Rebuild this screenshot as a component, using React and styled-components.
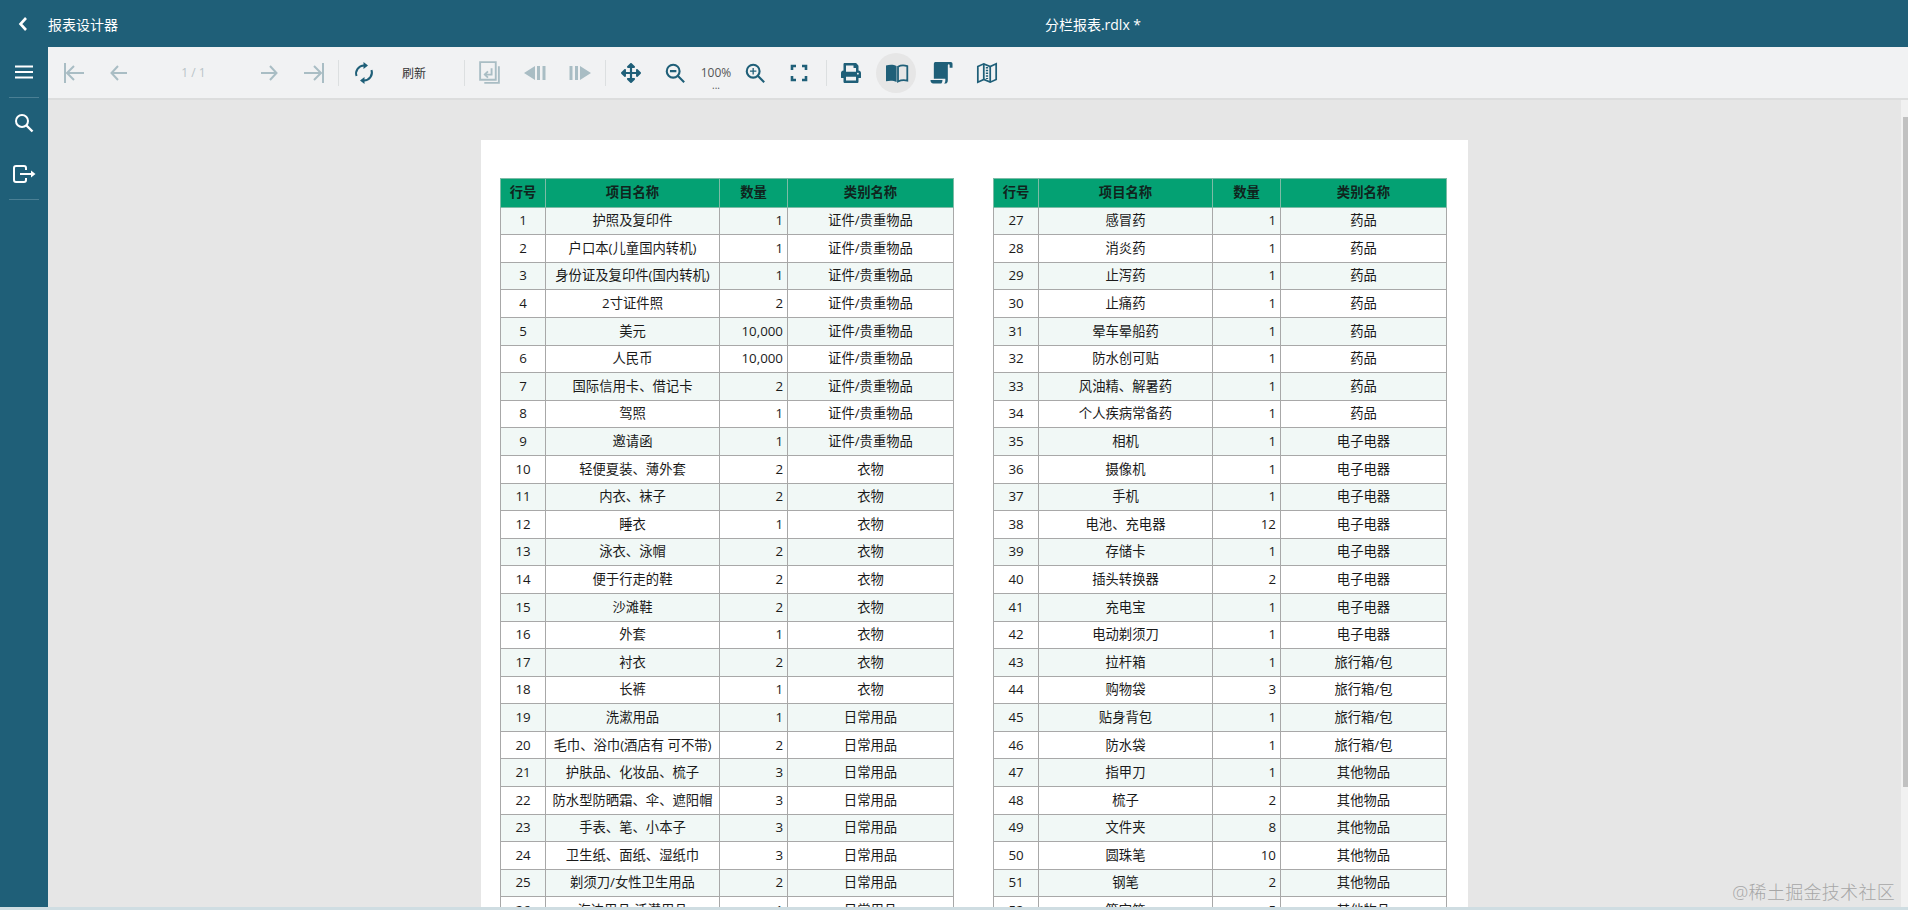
import React from 'react';
import styled, {createGlobalStyle} from 'styled-components';
import {FaArrowsAlt, FaPrint} from 'react-icons/fa';

const GlobalStyle = createGlobalStyle`
  html, body {
    margin: 0;
    padding: 0;
    height: 100%;
    overflow: hidden;
  }
  body {
    font-family: "Open Sans", "Noto Sans CJK SC", sans-serif;
    color: #222;
  }
`

const Screen = styled.div`
  position: relative;
  display: flex;
  flex-direction: column;
  width: 1908px;
  height: 910px;
  overflow: hidden;
`
const TopBar = styled.header`
  flex: none;
  display: flex;
  align-items: center;
  height: 47px;
  padding-left: 18px;
  background: #1f5f78;
  color: #fff;
  font-size: 14px;
`
const BackButton = styled.svg`
  width: 10px;
  height: 16px;
  margin-right: 20px;
`
const AppTitle = styled.span`
  width: 200px;
`
const FileTitle = styled.span`
  flex: 1;
  text-align: center;
  padding-left: 30px;
`
const Body = styled.div`
  flex: 1;
  display: flex;
  min-height: 0;
`
const Sidebar = styled.nav`
  flex: none;
  display: flex;
  flex-direction: column;
  align-items: center;
  width: 48px;
  background: #1f5f78;
`
const SideItem = styled.div`
  display: flex;
  align-items: center;
  justify-content: center;
  width: 30px;
  height: ${p => p.$h}px;
  border-bottom: ${p => (p.$line ? '1px solid #4a7f94' : 'none')};
`
const Main = styled.main`
  flex: 1;
  display: flex;
  flex-direction: column;
  min-width: 0;
`
const Toolbar = styled.div`
  flex: none;
  display: flex;
  align-items: center;
  height: 51px;
  padding-left: 3px;
  background: #f1f2f3;
  border-bottom: 2px solid #dcdddd;
`
const ToolButton = styled.div`
  position: relative;
  flex: none;
  display: flex;
  align-items: center;
  justify-content: center;
  width: ${p => p.$w || 45}px;
  height: 40px;
  color: ${p => (p.$off ? '#a9bdc4' : '#1f5f78')};
  &::before {
    content: '';
    display: ${p => (p.$active ? 'block' : 'none')};
    position: absolute;
    left: 2px;
    top: 0;
    width: 40px;
    height: 40px;
    border-radius: 50%;
    background: #e6e6e6;
  }
  svg {
    position: relative;
  }
`
const PageLabel = styled(ToolButton)`
  font-size: 12px;
  color: #b9c4c8;
`
const RefreshLabel = styled(ToolButton)`
  justify-content: flex-start;
  padding-left: 16px;
  box-sizing: border-box;
  font-size: 12px;
  color: #333;
`
const ZoomValue = styled.div`
  flex: none;
  position: relative;
  width: 40px;
  height: 40px;
  display: flex;
  align-items: center;
  justify-content: center;
  font-size: 12px;
  color: #555;
  &::after {
    content: '...';
    position: absolute;
    left: 0;
    right: 0;
    top: 26px;
    text-align: center;
    font-size: 10px;
    line-height: 12px;
    color: #555;
  }
`
const Separator = styled.span`
  flex: none;
  width: 1px;
  height: 26px;
  margin: 0 ${p => p.$gap || 2}px;
  background: #dcdfe0;
`
const ViewerRow = styled.div`
  flex: 1;
  display: flex;
  min-height: 0;
`
const Canvas = styled.div`
  flex: 1;
  display: flex;
  justify-content: center;
  min-width: 0;
  padding-top: 40px;
  overflow: hidden;
  background: #e6e6e6;
`
const Page = styled.div`
  flex: none;
  display: flex;
  align-items: flex-start;
  gap: 39px;
  width: 987px;
  height: 1300px;
  padding: 38px 20px 0 19px;
  box-sizing: border-box;
  background: #fff;
`
const Sheet = styled.table`
  flex: none;
  width: 453px;
  table-layout: fixed;
  border-collapse: collapse;
  font-size: 13.33px;
  line-height: 1;
  color: #1a1a1a;
`
const HeadCell = styled.th`
  height: 27.6px;
  padding: 0;
  background: #04a173;
  border: 1px solid #7dbba6;
  font-weight: 700;
  color: #10241d;
  text-align: center;
`
const Row = styled.tr`
  height: 27.6px;
  background: ${p => (p.$shade ? '#f1f8f6' : '#fff')};
`
const Cell = styled.td`
  padding: 0 ${p => (p.$right ? '4px' : '0')} 0 0;
  border: 1px solid #a8a8a8;
  text-align: ${p => (p.$right ? 'right' : 'center')};
  white-space: nowrap;
  overflow: hidden;
`
const ScrollTrack = styled.div`
  flex: none;
  width: 5px;
  padding-left: 2px;
  padding-top: 17px;
  background: #f1f1f1;
`
const ScrollThumb = styled.div`
  width: 5px;
  height: 670px;
  background: #c1c1c1;
`
const BottomEdge = styled.div`
  flex: none;
  height: 3px;
  background: #cfdde2;
`
const Watermark = styled.div`
  position: absolute;
  right: 13px;
  bottom: 6px;
  font-size: 18px;
  line-height: 24px;
  letter-spacing: 0.3px;
  color: #a6a6a6;
  font-weight: 300;
`

const leftRows = [
  [1, '护照及复印件', '1', '证件/贵重物品'],
  [2, '户口本(儿童国内转机)', '1', '证件/贵重物品'],
  [3, '身份证及复印件(国内转机)', '1', '证件/贵重物品'],
  [4, '2寸证件照', '2', '证件/贵重物品'],
  [5, '美元', '10,000', '证件/贵重物品'],
  [6, '人民币', '10,000', '证件/贵重物品'],
  [7, '国际信用卡、借记卡', '2', '证件/贵重物品'],
  [8, '驾照', '1', '证件/贵重物品'],
  [9, '邀请函', '1', '证件/贵重物品'],
  [10, '轻便夏装、薄外套', '2', '衣物'],
  [11, '内衣、袜子', '2', '衣物'],
  [12, '睡衣', '1', '衣物'],
  [13, '泳衣、泳帽', '2', '衣物'],
  [14, '便于行走的鞋', '2', '衣物'],
  [15, '沙滩鞋', '2', '衣物'],
  [16, '外套', '1', '衣物'],
  [17, '衬衣', '2', '衣物'],
  [18, '长裤', '1', '衣物'],
  [19, '洗漱用品', '1', '日常用品'],
  [20, '毛巾、浴巾(酒店有 可不带)', '2', '日常用品'],
  [21, '护肤品、化妆品、梳子', '3', '日常用品'],
  [22, '防水型防晒霜、伞、遮阳帽', '3', '日常用品'],
  [23, '手表、笔、小本子', '3', '日常用品'],
  [24, '卫生纸、面纸、湿纸巾', '3', '日常用品'],
  [25, '剃须刀/女性卫生用品', '2', '日常用品'],
  [26, '海边用品 活潜用品', '1', '日常用品'],
];

const rightRows = [
  [27, '感冒药', '1', '药品'],
  [28, '消炎药', '1', '药品'],
  [29, '止泻药', '1', '药品'],
  [30, '止痛药', '1', '药品'],
  [31, '晕车晕船药', '1', '药品'],
  [32, '防水创可贴', '1', '药品'],
  [33, '风油精、解暑药', '1', '药品'],
  [34, '个人疾病常备药', '1', '药品'],
  [35, '相机', '1', '电子电器'],
  [36, '摄像机', '1', '电子电器'],
  [37, '手机', '1', '电子电器'],
  [38, '电池、充电器', '12', '电子电器'],
  [39, '存储卡', '1', '电子电器'],
  [40, '插头转换器', '2', '电子电器'],
  [41, '充电宝', '1', '电子电器'],
  [42, '电动剃须刀', '1', '电子电器'],
  [43, '拉杆箱', '1', '旅行箱/包'],
  [44, '购物袋', '3', '旅行箱/包'],
  [45, '贴身背包', '1', '旅行箱/包'],
  [46, '防水袋', '1', '旅行箱/包'],
  [47, '指甲刀', '1', '其他物品'],
  [48, '梳子', '2', '其他物品'],
  [49, '文件夹', '8', '其他物品'],
  [50, '圆珠笔', '10', '其他物品'],
  [51, '钢笔', '2', '其他物品'],
  [52, '签字笔', '5', '其他物品'],
];

const ItemTable = ({rows}) => (
  <Sheet>
    <colgroup>
      <col width="45" />
      <col width="174" />
      <col width="68" />
      <col width="166" />
    </colgroup>
    <thead>
      <tr>
        <HeadCell>行号</HeadCell>
        <HeadCell>项目名称</HeadCell>
        <HeadCell>数量</HeadCell>
        <HeadCell>类别名称</HeadCell>
      </tr>
    </thead>
    <tbody>
      {rows.map(([no, name, count, kind]) => (
        <Row key={no} $shade={no % 2 === 1}>
          <Cell>{no}</Cell>
          <Cell>{name}</Cell>
          <Cell $right>{count}</Cell>
          <Cell>{kind}</Cell>
        </Row>
      ))}
    </tbody>
  </Sheet>
)

// line icons, 24 box, stroke follows the button colour
const Line = ({children, size = 24, width = 2}) => (
  <svg width={size} height={size} viewBox="0 0 24 24" fill="none" stroke="currentColor" strokeWidth={width}>
    {children}
  </svg>
)
const Solid = ({children, size = 24}) => (
  <svg width={size} height={size} viewBox="0 0 24 24" fill="currentColor">
    {children}
  </svg>
)

const FirstIcon = () => <Line><path d="M3 2v20" /><path d="M22 12H5M12 5l-7 7 7 7" /></Line>
const PrevIcon = () => <Line><path d="M20 12H4.500M11 5l-6.500 7 6.500 7" /></Line>
const NextIcon = () => <Line><path d="M4 12h15.500M13 5l6.500 7-6.500 7" /></Line>
const LastIcon = () => <Line><path d="M21 2v20" /><path d="M2 12h17M12 5l7 7-7 7" /></Line>
const RefreshIcon = () => (
  <Solid>
    <path d="M4.500 15A8 8 0 0 1 12 4.500" fill="none" stroke="currentColor" strokeWidth="2" />
    <path d="M19.500 9A8 8 0 0 1 12 19.500" fill="none" stroke="currentColor" strokeWidth="2" />
    <path d="M11.500 1l4.500 3.500-4.500 3.500zM12.500 16L8 19.500l4.500 3.500z" />
  </Solid>
)
const ExportIcon = () => (
  <Line size={25} width={1.8}>
    <path d="M3 2h15v17H3z" />
    <path d="M21 6v16H7" />
    <path d="M14 8v6H7.500" />
    <path d="M10.500 11l-3 3 3 3" />
  </Line>
)
const PrevSectionIcon = () => (
  <Solid><path d="M1 12l11-7v14zM14 5h3v14h-3zM19.500 5h3v14h-3z" /></Solid>
)
const NextSectionIcon = () => (
  <Solid><path d="M23 12L12 5v14zM10 5H7v14h3zM4.500 5h-3v14h3z" /></Solid>
)
const ZoomOutIcon = () => (
  <Line size={22} width={2.3}>
    <circle cx="10" cy="10" r="7" />
    <path d="M15 15l7 7M6.500 10h7" />
  </Line>
)
const ZoomInIcon = () => (
  <Line size={22} width={2.3}>
    <circle cx="10" cy="10" r="7" />
    <path d="M15 15l7 7" />
    <path d="M6.500 10h7M10 6.500v7" strokeWidth="1.400" />
  </Line>
)
const FullscreenIcon = () => (
  <Line width={2.6}>
    <path d="M5 9V5h4M15 5h4v4M19 15v4h-4M9 19H5v-4" />
  </Line>
)
const BookIcon = () => (
  <Solid>
    <path d="M1 4.500c3.500-1.200 7.500-1.200 10.600.4v16c-3-1.400-7-1.600-10.600-.6z" />
    <path d="M13 5.700c2.800-1.600 6.400-1.600 9.300-.6v14.500c-3-.7-6.400-.5-9.300.9z" fill="none" stroke="currentColor" strokeWidth="1.800" />
  </Solid>
)
const ScrollIcon = () => (
  <Solid size={23}>
    <path d="M5.500 1h16c1.400 0 2 .8 2 2v4h-3V4.500c0-.6-.4-1-1-1-.5 0-.9.4-.9 1V20c0 2.200-1 3.500-3 3.500h-1c1-.8 1.400-2 1.400-3.500v-1.500H4V3.500C4 2 4.400 1 5.500 1z" />
    <path d="M.5 19.800H13c0 1.600-.4 2.800-1.200 3.700H3.500c-2 0-3-1.500-3-3.700z" />
  </Solid>
)
const MapIcon = () => (
  <Line size={22} width={1.9}>
    <path d="M2 5l6.500-3 7 3L22 2v17l-6.500 3-7-3L2 22z" />
    <path d="M8.500 2v17M15.500 5v17" />
    <path d="M12 5.500v13" strokeDasharray="1.500 1.500" strokeWidth="2.500" />
  </Line>
)

export default function App() {
  return (
    <Screen>
      <GlobalStyle />
      <TopBar>
        <BackButton viewBox="0 0 10 16" fill="none" stroke="#fff" strokeWidth="2.600">
          <path d="M8 2L2.500 8 8 14" />
        </BackButton>
        <AppTitle>报表设计器</AppTitle>
        <FileTitle>分栏报表.rdlx *</FileTitle>
      </TopBar>
      <Body>
        <Sidebar>
          <SideItem $h={50} $line>
            <svg width="20" height="14" viewBox="0 0 20 14" stroke="#fff" strokeWidth="2">
              <path d="M1 1.500h18M1 7h18M1 12.500h18" />
            </svg>
          </SideItem>
          <SideItem $h={50}>
            <svg width="20" height="20" viewBox="0 0 20 20" fill="none" stroke="#fff" strokeWidth="2">
              <circle cx="8" cy="8" r="6" />
              <path d="M12.500 12.500l6 6" strokeWidth="2.400" />
            </svg>
          </SideItem>
          <SideItem $h={51} $line>
            <svg width="24" height="18" viewBox="0 0 24 18" fill="none" stroke="#fff" strokeWidth="2">
              <path d="M14 5V3a2 2 0 0 0-2-2H4a2 2 0 0 0-2 2v12a2 2 0 0 0 2 2h8a2 2 0 0 0 2-2v-2" />
              <path d="M8 9h12" />
              <path d="M19 5.500L23.500 9 19 12.500z" fill="#fff" stroke="none" />
            </svg>
          </SideItem>
        </Sidebar>
        <Main>
          <Toolbar>
            <ToolButton $off><FirstIcon /></ToolButton>
            <ToolButton $off><PrevIcon /></ToolButton>
            <PageLabel $w={105}>1 / 1</PageLabel>
            <ToolButton $off><NextIcon /></ToolButton>
            <ToolButton $off><LastIcon /></ToolButton>
            <Separator />
            <ToolButton><RefreshIcon /></ToolButton>
            <RefreshLabel $w={76}>刷新</RefreshLabel>
            <Separator />
            <ToolButton $off><ExportIcon /></ToolButton>
            <ToolButton $off><PrevSectionIcon /></ToolButton>
            <ToolButton $off><NextSectionIcon /></ToolButton>
            <Separator $gap={3} />
            <ToolButton $w={44}><FaArrowsAlt size={20} /></ToolButton>
            <ToolButton $w={43}><ZoomOutIcon /></ToolButton>
            <ZoomValue>100%</ZoomValue>
            <ToolButton $w={37}><ZoomInIcon /></ToolButton>
            <ToolButton $w={52}><FullscreenIcon /></ToolButton>
            <Separator $gap={1} />
            <ToolButton $w={46}><FaPrint size={20} /></ToolButton>
            <ToolButton $active><BookIcon /></ToolButton>
            <ToolButton><ScrollIcon /></ToolButton>
            <ToolButton><MapIcon /></ToolButton>
          </Toolbar>
          <ViewerRow>
            <Canvas>
              <Page>
                <ItemTable rows={leftRows} />
                <ItemTable rows={rightRows} />
              </Page>
            </Canvas>
            <ScrollTrack>
              <ScrollThumb />
            </ScrollTrack>
          </ViewerRow>
        </Main>
      </Body>
      <BottomEdge />
      <Watermark>@稀土掘金技术社区</Watermark>
    </Screen>
  )
}
